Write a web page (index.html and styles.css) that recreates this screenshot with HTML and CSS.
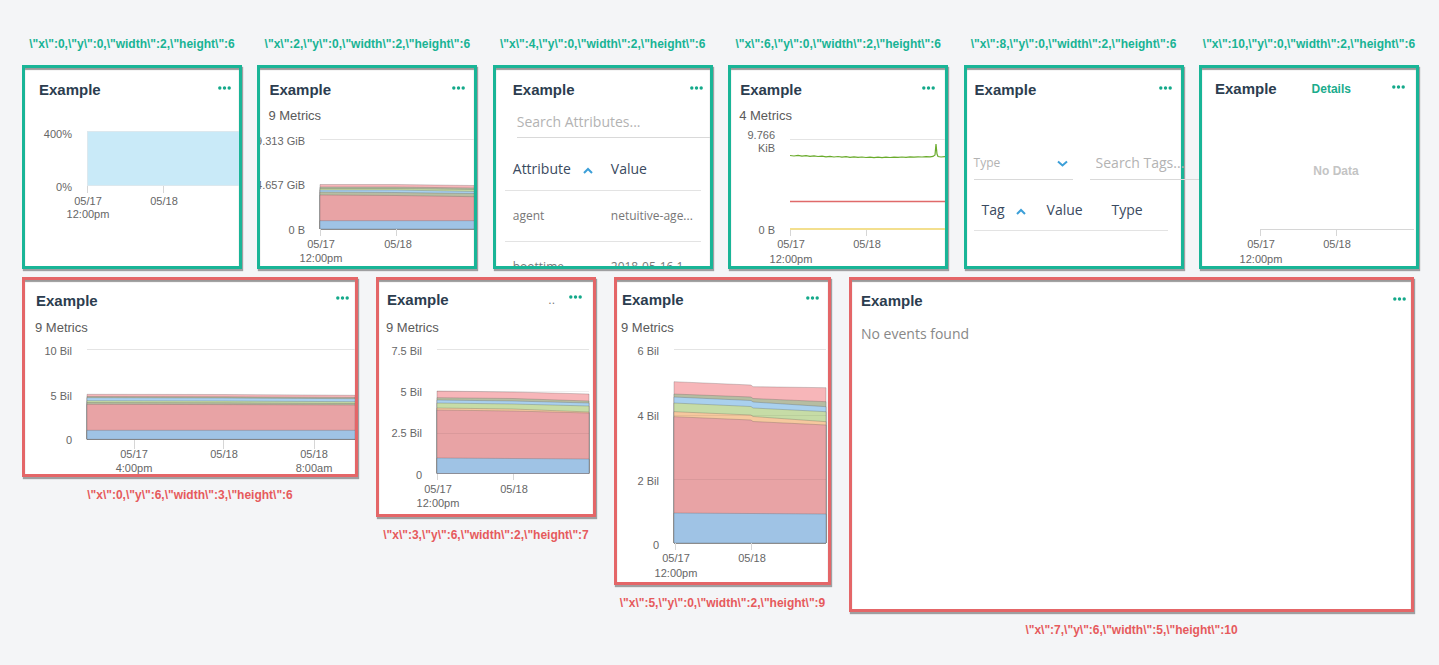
FILE: index.html
```html
<!DOCTYPE html>
<html lang="en">
<head>
    <meta charset="UTF-8">
    <meta name="viewport" content="width=device-width, initial-scale=1.0">
    <title>Dashboard layout</title>
    <link rel="stylesheet" href="styles.css">
</head>
<body>

<div class="board">

    <!-- widgets that passed the layout check -->
    <div class="row row-top">

        <div class="slot">
            <div class="tag tag-ok">\"x\":0,\"y\":0,\"width\":2,\"height\":6</div>
            <div class="card card-ok c1">
                <div class="card-head">
                    <span class="card-title">Example</span>
                    <svg class="more" width="13" height="4" viewBox="0 0 13 4"><circle cx="1.8" cy="2" r="1.7"/><circle cx="6.5" cy="2" r="1.7"/><circle cx="11.2" cy="2" r="1.7"/></svg>
                </div>
                <svg class="chart" width="214" height="166">
                    <rect x="62.5" y="31.5" width="152" height="54" class="fill-sky"/>
                    <text class="axis" x="47" y="38" text-anchor="end">400%</text>
                    <text class="axis" x="47" y="91" text-anchor="end">0%</text>
                    <line class="tick" x1="62.5" y1="86" x2="62.5" y2="93"/>
                    <line class="tick" x1="138.5" y1="86" x2="138.5" y2="93"/>
                    <text class="axis" x="63" y="105" text-anchor="middle">05/17</text>
                    <text class="axis" x="63" y="118" text-anchor="middle">12:00pm</text>
                    <text class="axis" x="139" y="105" text-anchor="middle">05/18</text>
                </svg>
            </div>
        </div>

        <div class="slot">
            <div class="tag tag-ok">\"x\":2,\"y\":0,\"width\":2,\"height\":6</div>
            <div class="card card-ok c2">
                <div class="card-head">
                    <span class="card-title">Example</span>
                    <svg class="more" width="13" height="4" viewBox="0 0 13 4"><circle cx="1.8" cy="2" r="1.7"/><circle cx="6.5" cy="2" r="1.7"/><circle cx="11.2" cy="2" r="1.7"/></svg>
                </div>
                <div class="card-sub">9 Metrics</div>
                <svg class="chart" width="214" height="142">
                    <line class="grid" x1="60" y1="15.5" x2="214" y2="15.5"/>
                    <polygon class="band b-pink" points="60,60.5 136,60.5 214,61.5 214,105 60,105"/>
                    <polygon class="band b-olive" points="60,63 136,63 214,64 214,105 60,105"/>
                    <polygon class="band b-green" points="60,64.5 136,64.5 214,65.5 214,105 60,105"/>
                    <polygon class="band b-blue" points="60,66 136,66 214,67.5 214,105 60,105"/>
                    <polygon class="band b-olive" points="60,68 136,68.5 214,69.5 214,105 60,105"/>
                    <polygon class="band b-red" points="60,71 136,71.5 214,72.7 214,105 60,105"/>
                    <polygon class="band b-navy" points="60,96.7 214,96.7 214,105 60,105"/>
                    <text class="axis" x="45" y="21" text-anchor="end">9.313 GiB</text>
                    <text class="axis" x="45" y="65" text-anchor="end">4.657 GiB</text>
                    <text class="axis" x="45" y="110" text-anchor="end">0 B</text>
                    <line class="tick" x1="60.5" y1="105" x2="60.5" y2="112"/>
                    <line class="tick" x1="136.5" y1="105" x2="136.5" y2="112"/>
                    <text class="axis" x="61" y="124" text-anchor="middle">05/17</text>
                    <text class="axis" x="61" y="138" text-anchor="middle">12:00pm</text>
                    <text class="axis" x="138" y="124" text-anchor="middle">05/18</text>
                </svg>
            </div>
        </div>

        <div class="slot">
            <div class="tag tag-ok">\"x\":4,\"y\":0,\"width\":2,\"height\":6</div>
            <div class="card card-ok c3">
                <div class="card-head">
                    <span class="card-title">Example</span>
                    <svg class="more" width="13" height="4" viewBox="0 0 13 4"><circle cx="1.8" cy="2" r="1.7"/><circle cx="6.5" cy="2" r="1.7"/><circle cx="11.2" cy="2" r="1.7"/></svg>
                </div>
                <div class="search search-attr">Search Attributes...</div>
                <div class="tbl tbl-attr">
                    <div class="tbl-row tbl-head">
                        <span class="cell">Attribute <svg class="sort" width="10" height="7" viewBox="0 0 10 7"><path d="M1 6 L5 2 L9 6"/></svg></span>
                        <span class="cell">Value</span>
                    </div>
                    <div class="tbl-row">
                        <span class="cell">agent</span>
                        <span class="cell">netuitive-age...</span>
                    </div>
                    <div class="tbl-row">
                        <span class="cell">boottime</span>
                        <span class="cell">2018-05-16 1...</span>
                    </div>
                </div>
            </div>
        </div>

        <div class="slot">
            <div class="tag tag-ok">\"x\":6,\"y\":0,\"width\":2,\"height\":6</div>
            <div class="card card-ok c4">
                <div class="card-head">
                    <span class="card-title">Example</span>
                    <svg class="more" width="13" height="4" viewBox="0 0 13 4"><circle cx="1.8" cy="2" r="1.7"/><circle cx="6.5" cy="2" r="1.7"/><circle cx="11.2" cy="2" r="1.7"/></svg>
                </div>
                <div class="card-sub">4 Metrics</div>
                <svg class="chart" width="214" height="142">
                    <line class="grid" x1="59" y1="15.5" x2="214" y2="15.5"/>
                    <polyline class="l-green" points="59,31.5 63,32 67,31.3 71,32.2 75,31.6 79,32.4 83,31.8 87,32.5 91,32.1 95,32.8 99,32.3 103,33 107,32.5 111,33.2 115,32.7 119,33.3 123,32.8 127,33.4 131,33 135,33.5 139,33.1 143,33.6 147,33.2 151,33.6 155,33.2 159,33.5 163,33.1 167,33.4 171,33 175,33.3 179,32.9 183,33.2 187,32.8 191,33 195,32.6 199,32.9 202,32.4 204,31 205,20 206,30 207,32.5 210,33 214,32.6"/>
                    <line class="l-red" x1="59" y1="77.5" x2="214" y2="77.5"/>
                    <line class="l-yellow" x1="59" y1="105" x2="214" y2="105"/>
                    <text class="axis" x="44" y="15" text-anchor="end">9.766</text>
                    <text class="axis" x="44" y="28" text-anchor="end">KiB</text>
                    <text class="axis" x="44" y="110" text-anchor="end">0 B</text>
                    <line class="tick" x1="59.5" y1="106" x2="59.5" y2="112"/>
                    <line class="tick" x1="135.5" y1="106" x2="135.5" y2="112"/>
                    <text class="axis" x="60" y="124" text-anchor="middle">05/17</text>
                    <text class="axis" x="60" y="139" text-anchor="middle">12:00pm</text>
                    <text class="axis" x="136" y="124" text-anchor="middle">05/18</text>
                </svg>
            </div>
        </div>

        <div class="slot">
            <div class="tag tag-ok">\"x\":8,\"y\":0,\"width\":2,\"height\":6</div>
            <div class="card card-ok c5">
                <div class="card-head">
                    <span class="card-title">Example</span>
                    <svg class="more" width="13" height="4" viewBox="0 0 13 4"><circle cx="1.8" cy="2" r="1.7"/><circle cx="6.5" cy="2" r="1.7"/><circle cx="11.2" cy="2" r="1.7"/></svg>
                </div>
                <div class="filters">
                    <div class="select">Type <svg class="sort" width="11" height="7" viewBox="0 0 11 7"><path d="M1 1.5 L5.5 5.5 L10 1.5"/></svg></div>
                    <div class="search search-tags"><span>Search Tags...</span></div>
                </div>
                <div class="tbl tbl-tags">
                    <div class="tbl-row tbl-head">
                        <span class="cell">Tag <svg class="sort" width="10" height="7" viewBox="0 0 10 7"><path d="M1 6 L5 2 L9 6"/></svg></span>
                        <span class="cell">Value</span>
                        <span class="cell">Type</span>
                    </div>
                </div>
            </div>
        </div>

        <div class="slot">
            <div class="tag tag-ok">\"x\":10,\"y\":0,\"width\":2,\"height\":6</div>
            <div class="card card-ok c6">
                <div class="card-head">
                    <span class="card-title">Example</span>
                    <span class="details">Details</span>
                    <svg class="more more-gap" width="13" height="4" viewBox="0 0 13 4"><circle cx="1.8" cy="2" r="1.7"/><circle cx="6.5" cy="2" r="1.7"/><circle cx="11.2" cy="2" r="1.7"/></svg>
                </div>
                <svg class="chart" width="214" height="166">
                    <text class="nodata" x="134" y="75" text-anchor="middle">No Data</text>
                    <line class="tick" x1="58" y1="129.5" x2="212" y2="129.5"/>
                    <line class="tick" x1="58.5" y1="129" x2="58.5" y2="136"/>
                    <line class="tick" x1="134.5" y1="129" x2="134.5" y2="136"/>
                    <text class="axis" x="59" y="148" text-anchor="middle">05/17</text>
                    <text class="axis" x="59" y="163" text-anchor="middle">12:00pm</text>
                    <text class="axis" x="135" y="148" text-anchor="middle">05/18</text>
                </svg>
            </div>
        </div>

    </div>

    <!-- widgets that failed the layout check -->
    <div class="row row-bottom">

        <div class="slot slot-a">
            <div class="card card-bad cA">
                <div class="card-head">
                    <span class="card-title">Example</span>
                    <svg class="more" width="13" height="4" viewBox="0 0 13 4"><circle cx="1.8" cy="2" r="1.7"/><circle cx="6.5" cy="2" r="1.7"/><circle cx="11.2" cy="2" r="1.7"/></svg>
                </div>
                <div class="card-sub">9 Metrics</div>
                <svg class="chart" width="330" height="138">
                    <line class="grid" x1="62" y1="13.5" x2="330" y2="13.5"/>
                    <polygon class="band b-pink" points="62,58.3 199,58.5 330,59.3 330,103.3 62,103.3"/>
                    <polygon class="band b-olive" points="62,60.5 199,60.8 330,61.5 330,103.3 62,103.3"/>
                    <polygon class="band b-blue" points="62,61.7 199,62 330,62.7 330,103.3 62,103.3"/>
                    <polygon class="band b-green" points="62,64.7 199,65 330,65.7 330,103.3 62,103.3"/>
                    <polygon class="band b-olive" points="62,66.5 199,66.8 330,67.5 330,103.3 62,103.3"/>
                    <polygon class="band b-red" points="62,68.3 199,68.6 330,69 330,103.3 62,103.3"/>
                    <polygon class="band b-navy" points="62,94.3 330,94.3 330,103.3 62,103.3"/>
                    <text class="axis" x="47" y="19" text-anchor="end">10 Bil</text>
                    <text class="axis" x="47" y="64" text-anchor="end">5 Bil</text>
                    <text class="axis" x="47" y="108" text-anchor="end">0</text>
                    <line class="tick" x1="109.5" y1="104" x2="109.5" y2="113"/>
                    <line class="tick" x1="198.5" y1="104" x2="198.5" y2="113"/>
                    <line class="tick" x1="289.5" y1="104" x2="289.5" y2="113"/>
                    <text class="axis" x="109" y="122" text-anchor="middle">05/17</text>
                    <text class="axis" x="109" y="136" text-anchor="middle">4:00pm</text>
                    <text class="axis" x="199" y="122" text-anchor="middle">05/18</text>
                    <text class="axis" x="289" y="122" text-anchor="middle">05/18</text>
                    <text class="axis" x="289" y="136" text-anchor="middle">8:00am</text>
                </svg>
            </div>
            <div class="tag tag-bad">\"x\":0,\"y\":6,\"width\":3,\"height\":6</div>
        </div>

        <div class="slot slot-b">
            <div class="card card-bad cB">
                <div class="card-head">
                    <span class="card-title">Example</span>
                    <span class="trunc">..</span>
                    <svg class="more" width="13" height="4" viewBox="0 0 13 4"><circle cx="1.8" cy="2" r="1.7"/><circle cx="6.5" cy="2" r="1.7"/><circle cx="11.2" cy="2" r="1.7"/></svg>
                </div>
                <div class="card-sub">9 Metrics</div>
                <svg class="chart" width="214" height="178">
                    <line class="grid" x1="58" y1="13.5" x2="210" y2="13.5"/>
                    <polygon class="band b-pink" points="58,55 134,56 210,58 210,137.5 58,137.5"/>
                    <polygon class="band b-olive" points="58,61.7 134,62.5 210,65 210,137.5 58,137.5"/>
                    <polygon class="band b-blue" points="58,64 134,65 210,67 210,137.5 58,137.5"/>
                    <polygon class="band b-green" points="58,67 134,68 210,70 210,137.5 58,137.5"/>
                    <polygon class="band b-orange" points="58,72 134,73 210,76 210,137.5 58,137.5"/>
                    <polygon class="band b-red" points="58,74 134,75 210,77 210,137.5 58,137.5"/>
                    <polygon class="band b-navy" points="58,122 134,122.5 210,123 210,137.5 58,137.5"/>
                    <line class="grid-over" x1="58" y1="55.5" x2="210" y2="55.5"/>
                    <line class="grid-over" x1="58" y1="97.5" x2="210" y2="97.5"/>
                    <text class="axis" x="43" y="19" text-anchor="end">7.5 Bil</text>
                    <text class="axis" x="43" y="60" text-anchor="end">5 Bil</text>
                    <text class="axis" x="43" y="101" text-anchor="end">2.5 Bil</text>
                    <text class="axis" x="43" y="143" text-anchor="end">0</text>
                    <line class="tick" x1="58.5" y1="138" x2="58.5" y2="144"/>
                    <line class="tick" x1="134.5" y1="138" x2="134.5" y2="144"/>
                    <text class="axis" x="59" y="157" text-anchor="middle">05/17</text>
                    <text class="axis" x="59" y="171" text-anchor="middle">12:00pm</text>
                    <text class="axis" x="135" y="157" text-anchor="middle">05/18</text>
                </svg>
            </div>
            <div class="tag tag-bad">\"x\":3,\"y\":6,\"width\":2,\"height\":7</div>
        </div>

        <div class="slot slot-c">
            <div class="card card-bad cC">
                <div class="card-head">
                    <span class="card-title">Example</span>
                    <svg class="more" width="13" height="4" viewBox="0 0 13 4"><circle cx="1.8" cy="2" r="1.7"/><circle cx="6.5" cy="2" r="1.7"/><circle cx="11.2" cy="2" r="1.7"/></svg>
                </div>
                <div class="card-sub">9 Metrics</div>
                <svg class="chart" width="211" height="246">
                    <line class="grid" x1="57" y1="13.5" x2="209" y2="13.5"/>
                    <polygon class="band b-pink" points="57,45.7 134,49 136,50.7 209,51.7 209,207 57,207"/>
                    <polygon class="band b-olive" points="57,58 134,61 136,62.5 209,65.7 209,207 57,207"/>
                    <polygon class="band b-blue" points="57,61 134,64.5 136,66 209,70.7 209,207 57,207"/>
                    <polygon class="band b-green" points="57,67 134,70.5 136,72 209,75.7 209,207 57,207"/>
                    <polygon class="band b-orange" points="57,75.7 134,79 136,80.5 209,85.7 209,207 57,207"/>
                    <polygon class="band b-red" points="57,80.7 134,84 136,85.5 209,89 209,207 57,207"/>
                    <polygon class="band b-navy" points="57,177 134,177.5 209,178 209,207 57,207"/>
                    <line class="grid-over" x1="57" y1="79.5" x2="209" y2="79.5"/>
                    <line class="grid-over" x1="57" y1="143.5" x2="209" y2="143.5"/>
                    <text class="axis" x="42" y="19" text-anchor="end">6 Bil</text>
                    <text class="axis" x="42" y="84" text-anchor="end">4 Bil</text>
                    <text class="axis" x="42" y="149" text-anchor="end">2 Bil</text>
                    <text class="axis" x="42" y="213" text-anchor="end">0</text>
                    <line class="tick" x1="58.5" y1="207" x2="58.5" y2="214"/>
                    <line class="tick" x1="134.5" y1="207" x2="134.5" y2="214"/>
                    <text class="axis" x="59" y="226" text-anchor="middle">05/17</text>
                    <text class="axis" x="59" y="241" text-anchor="middle">12:00pm</text>
                    <text class="axis" x="135" y="226" text-anchor="middle">05/18</text>
                </svg>
            </div>
            <div class="tag tag-bad">\"x\":5,\"y\":0,\"width\":2,\"height\":9</div>
        </div>

        <div class="slot slot-d">
            <div class="card card-bad cD">
                <div class="card-head">
                    <span class="card-title">Example</span>
                    <svg class="more" width="13" height="4" viewBox="0 0 13 4"><circle cx="1.8" cy="2" r="1.7"/><circle cx="6.5" cy="2" r="1.7"/><circle cx="11.2" cy="2" r="1.7"/></svg>
                </div>
                <div class="empty">No events found</div>
            </div>
            <div class="tag tag-bad">\"x\":7,\"y\":6,\"width\":5,\"height\":10</div>
        </div>

    </div>
</div>

</body>
</html>
```

FILE: styles.css
```css
body {
    margin: 0;
    background-color: #f4f5f7;
    font-family: "Liberation Sans", Arial, sans-serif;
}
.board {
    padding: 37px 0 0 22px;
}
.row {
    display: flex;
    align-items: flex-start;
}
.row-top {
    gap: 15.4px;
}
.row-bottom {
    gap: 18px;
    margin-top: 8px;
}
.slot {
    display: flex;
    flex-direction: column;
    align-items: center;
    width: 220px;
}
.slot-a { width: 336px; }
.slot-b { width: 220px; }
.slot-c { width: 217px; }
.slot-d { width: 565px; }

.tag {
    font-size: 12px;
    font-weight: bold;
    line-height: 14px;
    white-space: nowrap;
}
.tag-ok {
    color: #18b394;
    margin-bottom: 14px;
}
.tag-bad {
    color: #e65a5c;
    margin-top: 11px;
}

/* widget card */
.card {
    --pl: 9px;
    --pr: 9px;
    --pt: 12px;
    box-sizing: border-box;
    width: 100%;
    background: #fff;
    border: 3px solid;
    overflow: hidden;
    box-shadow: inset 0 2px 1px rgba(0,0,0,0.4), 1px 2px 1px rgba(0,0,0,0.35);
}
.card-ok {
    border-color: #19b597;
    height: 204px;
}
.card-bad {
    border-color: #e46668;
}
.cA { height: 200px; --pl: 11px; --pr: 6px; --pt: 9px; }
.cB { height: 240px; --pl: 8px; --pr: 11px; --pt: 7px; }
.cC { height: 308px; --pl: 5px; --pt: 8px; }
.cD { height: 335px; --pr: 5px; --pt: 10px; }
.c1 { --pl: 14px; --pr: 8px; }
.c3 { --pl: 17px; --pr: 7px; }
.c4 { --pr: 10px; }
.c5 { --pl: 8px; overflow: visible; }
.c6 { --pl: 13px; --pr: 11px; --pt: 10px; }

.card-head {
    box-sizing: border-box;
    height: 32px;
    display: flex;
    align-items: center;
    align-self: stretch;
    padding: var(--pt) var(--pr) 0 var(--pl);
}
.card-head > * {
    height: 20px;
}
.card-title {
    flex: 1;
    font-size: 15px;
    font-weight: bold;
    line-height: 20px;
    color: #2c3d4f;
}
.more {
    height: 4px;
    margin-bottom: 5px;
    fill: #14a98a;
}
.more-gap {
    margin-left: 41px;
}
.details {
    font-size: 12px;
    font-weight: bold;
    line-height: 20px;
    color: #1aac8c;
}
.trunc {
    font-size: 12px;
    line-height: 20px;
    color: #777;
    margin-right: 14px;
}
.card-sub {
    margin-top: 8px;
    padding-left: calc(var(--pl) - 1px);
    font-size: 13px;
    line-height: 16px;
    color: #5a5a5a;
}

/* charts */
.chart {
    display: block;
}
.axis {
    font-family: "Liberation Sans", Arial, sans-serif;
    font-size: 11px;
    fill: #666;
}
.nodata {
    font-family: "Liberation Sans", Arial, sans-serif;
    font-size: 12px;
    font-weight: bold;
    fill: #c4c4c4;
}
.grid {
    stroke: #e4e4e4;
    stroke-width: 1;
}
.grid-over {
    stroke: rgba(0,0,0,0.06);
    stroke-width: 1;
}
.tick {
    stroke: #d6d6d6;
    stroke-width: 1;
}
.fill-sky {
    fill: #c9eaf8;
    stroke: #dce8ee;
}
.band {
    stroke: rgba(70,70,70,0.35);
    stroke-width: 0.7;
}
.b-pink { fill: #f7b6b9; }
.b-olive { fill: #b6bda2; }
.b-green { fill: #c6dca6; }
.b-blue { fill: #a9d0ee; }
.b-orange { fill: #f6c89e; }
.b-red { fill: #e8a3a5; }
.b-navy { fill: #9fc3e5; }
.l-green {
    fill: none;
    stroke: #6aab2c;
    stroke-width: 1.2;
}
.l-red {
    stroke: #e06a6a;
    stroke-width: 1.5;
}
.l-yellow {
    stroke: #f3df8e;
    stroke-width: 2;
}

/* attribute and tag tables */
.search {
    font-family: "Open Sans", sans-serif;
    font-size: 14px;
    line-height: 24px;
    color: #b3b3b3;
    border-bottom: 1px solid #d9d9d9;
    padding-bottom: 3px;
}
.search-attr {
    margin: 10px 0 0 21px;
}
.filters {
    display: flex;
    gap: 17px;
    margin: 51px 0 0 7px;
}
.select {
    flex: none;
    display: flex;
    justify-content: space-between;
    align-items: center;
    width: 99px;
    padding-right: 5px;
    box-sizing: border-box;
    font-family: "Open Sans", sans-serif;
    font-size: 12px;
    line-height: 24px;
    color: #b3b3b3;
    border-bottom: 1px solid #d9d9d9;
    padding-bottom: 4px;
}
.search-tags {
    width: 110px;
    flex: none;
    padding-left: 6px;
    padding-bottom: 4px;
    box-sizing: border-box;
}
.search-tags span {
    display: block;
    width: 92px;
    overflow: hidden;
    white-space: nowrap;
}
.sort {
    fill: none;
    stroke: #3c9fd8;
    stroke-width: 2;
    margin-left: 8px;
}
.tbl {
    font-family: "Open Sans", sans-serif;
}
.tbl-attr {
    margin-left: 9px;
    width: 196px;
}
.tbl-tags {
    margin-left: 7px;
    width: 194px;
}
.tbl-row {
    display: grid;
    border-bottom: 1px solid #e3e3e3;
    padding: 16px 0;
    font-size: 12px;
    line-height: 18px;
    color: #777;
}
.tbl-attr .tbl-row {
    grid-template-columns: 98px 98px;
}
.tbl-tags .tbl-row {
    grid-template-columns: 65px 65px 64px;
}
.tbl-row.tbl-head {
    padding: 21px 0 11px;
    font-size: 14px;
    line-height: 20px;
    color: #3a4a60;
}
.tbl-tags .tbl-head {
    padding: 20px 0 10px;
}
.cell {
    padding-left: 8px;
    white-space: nowrap;
    overflow: hidden;
}
.empty {
    margin-top: 10px;
    padding-left: var(--pl);
    font-family: "Open Sans", sans-serif;
    font-size: 14px;
    line-height: 24px;
    color: #888;
}
```
